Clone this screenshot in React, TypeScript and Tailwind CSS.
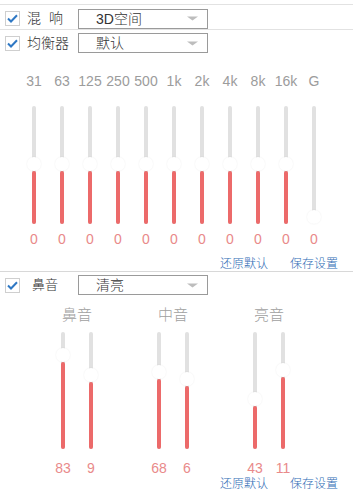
import React from 'react';

const eqBands = ['31', '63', '125', '250', '500', '1k', '2k', '4k', '8k', '16k'];

function CheckBox() {
  return (
    <div className="w-[15px] h-[15px] border border-[#cfcfcf] bg-white flex items-center justify-center shrink-0">
      <svg width="11" height="9" viewBox="0 0 11 9">
        <polyline points="1,4.5 4,7.5 10,1.2" fill="none" stroke="#2f78c4" strokeWidth="2" />
      </svg>
    </div>
  );
}

function Select({ value }: { value: string }) {
  return (
    <div className="w-[130px] h-[20px] border border-[#9a9a9a] bg-white flex items-center justify-between pl-[17px] pr-[9px] text-[14px] text-[#333]">
      <span className="leading-none">{value}</span>
      <svg width="11" height="5" viewBox="0 0 11 5">
        <path d="M0 0.5 H11 L5.5 4.5 Z" fill="#bdbdbd" />
      </svg>
    </div>
  );
}

// track with value measured as red height from bottom, knob sits above the red part
function Slider({ height, red }: { height: number; red: number }) {
  return (
    <div className="relative w-[4px] rounded-full bg-[#e1e1e1]" style={{ height }}>
      {red > 0 && (
        <div className="absolute bottom-0 left-0 w-[4px] rounded-full bg-[#ec6a6a]" style={{ height: red }} />
      )}
      <div
        className="absolute left-1/2 -translate-x-1/2 w-[14px] h-[14px] rounded-full bg-white shadow-[0_0_2px_rgba(0,0,0,0.07)]"
        style={{ bottom: red }}
      />
    </div>
  );
}

const voice = [
  { label: '鼻音', items: [{ v: '83', top: 363 }, { v: '9', top: 383 }] },
  { label: '中音', items: [{ v: '68', top: 380 }, { v: '6', top: 387 }] },
  { label: '亮音', items: [{ v: '43', top: 407 }, { v: '11', top: 378 }] },
];

export default function App() {
  return (
    <div
      className="w-[353px] h-[496px] bg-white overflow-hidden text-[#333] font-light"
      style={{ fontFamily: '"Liberation Sans", "Noto Sans CJK SC", sans-serif' }}
    >
      <div className="mt-[4px] border-t border-[#e2e2e2]" />

      {/* 混响 */}
      <div className="h-[25px] pt-[3px] flex items-center border-b border-[#e2e2e2]">
        <div className="ml-[5px]"><CheckBox /></div>
        <div className="w-[58px] pl-[7px] text-[14px] flex">
          <span>混</span>
          <span className="ml-[8px]">响</span>
        </div>
        <Select value="3D空间" />
      </div>

      {/* 均衡器 */}
      <div className="h-[26px] flex items-center">
        <div className="ml-[5px]"><CheckBox /></div>
        <div className="w-[58px] pl-[7px] text-[14px]">均衡器</div>
        <Select value="默认" />
      </div>

      <div className="mt-[15px] h-[20px] flex pl-[20px] text-[14px] text-[#9c9c9c] leading-[20px]">
        {eqBands.map(b => (
          <div key={b} className="w-[28px] text-center">{b}</div>
        ))}
        <div className="w-[28px] text-center">G</div>
      </div>

      <div className="mt-[15px] flex pl-[20px]">
        {eqBands.map(b => (
          <div key={b} className="w-[28px] flex justify-center">
            <Slider height={118} red={53} />
          </div>
        ))}
        <div className="w-[28px] flex justify-center">
          <Slider height={118} red={0} />
        </div>
      </div>

      <div className="mt-[5px] h-[20px] flex pl-[20px] text-[14px] text-[#e98a8a] leading-[20px]">
        {[...eqBands, 'G'].map(b => (
          <div key={b} className="w-[28px] text-center">0</div>
        ))}
      </div>

      <div className="mt-[7px] h-[16px] flex justify-end gap-[22px] pr-[15px] text-[12px] leading-[16px] text-[#2f6db5] border-b border-[#d8d8d8]">
        <span>还原默认</span>
        <span>保存设置</span>
      </div>

      {/* 鼻音 */}
      <div className="h-[26px] flex items-center">
        <div className="ml-[5px]"><CheckBox /></div>
        <div className="w-[58px] pl-[12px] text-[13px]">鼻音</div>
        <Select value="清亮" />
      </div>

      <div className="mt-[7px] h-[20px] flex pl-[49px] gap-[40px] text-[15px] text-[#a0a0a0] leading-[20px]">
        {voice.map(g => (
          <div key={g.label} className="w-[56px] text-center">{g.label}</div>
        ))}
      </div>

      <div className="mt-[7px] flex pl-[49px] gap-[40px]">
        {voice.map(g => (
          <div key={g.label} className="w-[56px] flex">
            {g.items.map((it, i) => (
              <div key={i} className="w-[28px] flex justify-center">
                <Slider height={117} red={450 - it.top} />
              </div>
            ))}
          </div>
        ))}
      </div>

      <div className="mt-[10px] h-[18px] flex pl-[49px] gap-[40px] text-[14px] text-[#e98a8a] leading-[18px]">
        {voice.map(g => (
          <div key={g.label} className="w-[56px] flex">
            {g.items.map((it, i) => (
              <div key={i} className="w-[28px] text-center">{it.v}</div>
            ))}
          </div>
        ))}
      </div>

      <div className="h-[14px] flex justify-end gap-[22px] pr-[15px] text-[12px] leading-[14px] text-[#2f6db5]">
        <span>还原默认</span>
        <span>保存设置</span>
      </div>
    </div>
  );
}
